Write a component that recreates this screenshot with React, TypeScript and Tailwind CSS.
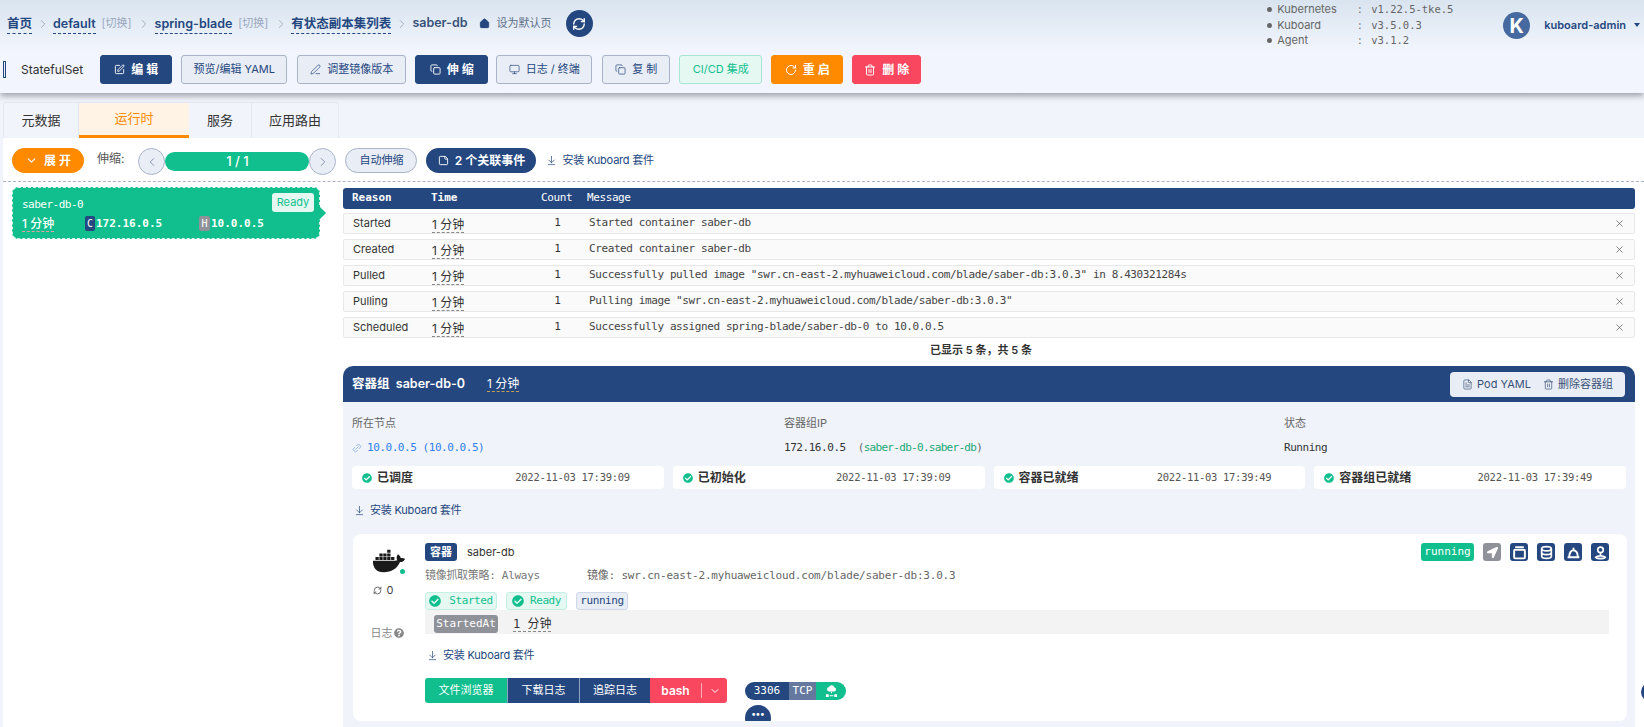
import { ArrowDownToLine, ChevronDown, ChevronLeft, ChevronRight, Copy, FileText, Home, Link2, Monitor, PenLine, RefreshCw, RotateCw, SquarePen, StickyNote, Trash2, X } from 'lucide-react'
import type { ReactNode } from 'react'
import { FaCheckCircle, FaDocker, FaLocationArrow, FaQuestionCircle } from 'react-icons/fa'

const sans = "font-['Inter','Noto_Sans_CJK_SC',sans-serif]"
const mono = "font-['DejaVu_Sans_Mono','Noto_Sans_CJK_SC',monospace]"

const events = [
  { reason: 'Started', message: 'Started container saber-db' },
  { reason: 'Created', message: 'Created container saber-db' },
  { reason: 'Pulled', message: 'Successfully pulled image "swr.cn-east-2.myhuaweicloud.com/blade/saber-db:3.0.3" in 8.430321284s' },
  { reason: 'Pulling', message: 'Pulling image "swr.cn-east-2.myhuaweicloud.com/blade/saber-db:3.0.3"' },
  { reason: 'Scheduled', message: 'Successfully assigned spring-blade/saber-db-0 to 10.0.0.5' },
]

const conditions = [
  { label: '已调度', time: '2022-11-03 17:39:09' },
  { label: '已初始化', time: '2022-11-03 17:39:09' },
  { label: '容器已就绪', time: '2022-11-03 17:39:49' },
  { label: '容器组已就绪', time: '2022-11-03 17:39:49' },
]

const Crumb = ({ children }: { children: ReactNode }) => (
  <span className="border-b border-dashed border-[#24477f] text-[12.5px] leading-[19px] font-semibold text-[#24477f]">{children}</span>
)

const Sep = () => <ChevronRight className="mx-[3.5px] h-[14px] w-[14px] text-[#9aa5b8]" strokeWidth={1.5} />

const Switch = () => <span className="ml-[6px] text-[11px] text-[#9aa7bd]">[切换]</span>

const Btn = ({ className, children }: { className: string; children: ReactNode }) => (
  <button className={`flex h-[29px] items-center justify-center gap-[6px] rounded-[3px] border ${className}`}>{children}</button>
)

const Install = ({ className }: { className: string }) => (
  <span className={`flex items-center gap-[5px] text-[11px] tracking-[-0.2px] text-[#24477f] ${className}`}>
    <ArrowDownToLine className="h-[11px] w-[11px]" strokeWidth={1.5} />
    安装 Kuboard 套件
  </span>
)

const Ago = ({ className }: { className: string }) => (
  <span className={`border-b border-dashed border-[#888] text-xs leading-[14px] ${className}`}>1 分钟</span>
)

const IconBox = ({ children, className = 'bg-[#24477f]' }: { children: ReactNode; className?: string }) => (
  <span className={`flex h-[18px] w-[18px] items-center justify-center rounded-[3px] text-white ${className}`}>{children}</span>
)

const Tag = ({ className, children }: { className: string; children: ReactNode }) => (
  <span className={`flex h-[18px] items-center justify-center rounded-[3px] border text-[11px] tracking-[-0.4px] ${className}`}>{children}</span>
)

export default function App() {
  return (
    <div className={`relative h-[727px] overflow-hidden bg-[#f1f4fb] ${sans}`}>
      <header className="relative z-10 h-[93px] bg-gradient-to-b from-[#d8e4ef] to-[#f2f5fd] to-55% shadow-[0_3px_6px_rgba(60,60,70,0.45)]">
        <div className="flex h-[55px] pl-[7px]">
          <div className="flex h-[47px] items-center">
            <Crumb>首页</Crumb>
            <Sep />
            <Crumb>default</Crumb>
            <Switch />
            <span className="w-[2px]" />
            <Sep />
            <Crumb>spring-blade</Crumb>
            <Switch />
            <span className="w-[2px]" />
            <Sep />
            <Crumb>有状态副本集列表</Crumb>
            <Sep />
            <span className="text-[12.5px] font-semibold text-[#3a5378]">saber-db</span>
            <Home className="ml-[11px] h-[11px] w-[11px] fill-[#24477f] text-[#24477f]" />
            <span className="ml-[7px] text-[11px] text-[#5d6f88]">设为默认页</span>
            <span className="ml-[14px] flex h-[27px] w-[27px] items-center justify-center rounded-full bg-[#24477f]">
              <RefreshCw className="h-[14px] w-[14px] text-white" strokeWidth={2.4} />
            </span>
          </div>
          <div className="ml-auto flex items-start pr-[4px]">
            <div className="w-[236px] pt-[2px] text-[11px] leading-[15.5px] text-[#666]">
              {[
                ['Kubernetes', 'v1.22.5-tke.5'],
                ['Kuboard', 'v3.5.0.3'],
                ['Agent', 'v3.1.2'],
              ].map(([name, version]) => (
                <div key={name} className="flex items-center">
                  <span className="mr-[5px] h-[5px] w-[5px] rounded-full bg-[#666]" />
                  <span className="w-[81px]">{name}</span>
                  <span className="w-[13px]">:</span>
                  <span className={`${mono} text-[10.5px]`}>{version}</span>
                </div>
              ))}
            </div>
            <span className="mt-[12px] flex h-[27px] w-[27px] items-center justify-center rounded-full bg-[#466a9f] text-xl leading-none font-bold text-white">K</span>
            <span className="mt-[17px] ml-[14px] text-[11px] font-semibold text-[#24477f]">kuboard-admin</span>
            <span className="mt-[23px] ml-[8px] h-0 w-0 border-x-[3.5px] border-t-[4px] border-x-transparent border-t-[#24477f]" />
          </div>
        </div>
        <div className="flex items-center pl-[3px]">
          <span className="h-[17px] w-[3px] border border-[#24477f] bg-[#e8edf5]" />
          <span className="mr-[17px] ml-[15px] text-xs text-[#333]">StatefulSet</span>
          <Btn className="w-[72px] border-[#24477f] bg-[#24477f] text-xs font-semibold text-white"><SquarePen className="h-[11px] w-[11px]" />编 辑</Btn>
          <Btn className="ml-[9px] w-[106px] border-[#a9b4c9] bg-[#e9edf5] text-[11px] text-[#24477f]">预览/编辑 YAML</Btn>
          <Btn className="ml-[10px] w-[109px] border-[#a9b4c9] bg-[#e9edf5] text-[11px] text-[#24477f]"><PenLine className="h-[11px] w-[11px]" strokeWidth={1.5} />调整镜像版本</Btn>
          <Btn className="ml-[9px] w-[73px] border-[#24477f] bg-[#24477f] text-xs font-semibold text-white"><Copy className="h-[11px] w-[11px]" />伸 缩</Btn>
          <Btn className="ml-[8px] w-[96px] border-[#a9b4c9] bg-[#e9edf5] text-[11px] text-[#24477f]"><Monitor className="h-[11px] w-[11px]" strokeWidth={1.5} />日志 / 终端</Btn>
          <Btn className="ml-[10px] w-[68px] border-[#a9b4c9] bg-[#e9edf5] text-[11px] text-[#24477f]"><Copy className="h-[11px] w-[11px]" strokeWidth={1.5} />复 制</Btn>
          <Btn className="ml-[9px] w-[83px] border-[#a6e6d2] bg-[#e5f8f2] text-[11px] text-[#10bf8d]">CI/CD 集成</Btn>
          <Btn className="ml-[9px] w-[72px] border-[#ff8a00] bg-[#ff8a00] text-xs font-semibold text-white"><RotateCw className="h-[12px] w-[12px]" />重 启</Btn>
          <Btn className="ml-[9px] w-[69px] border-[#f8475f] bg-[#f8475f] text-xs font-semibold text-white"><Trash2 className="h-[12px] w-[12px]" />删 除</Btn>
        </div>
      </header>

      <main className="ml-[3px] pt-[9px]">
        <div className="flex h-[36px] w-[336px] rounded-t-[3px] border border-b-0 border-[#e3e8f2] text-[13px] text-[#333]">
          <span className="flex w-[75px] items-center justify-center border-r border-[#e3e8f2]">元数据</span>
          <span className="flex w-[110px] items-center justify-center border-b-[3px] border-[#ff8a00] bg-[#fff3e6] text-[#ff8a00]">运行时</span>
          <span className="flex w-[63px] items-center justify-center border-r border-[#e3e8f2]">服务</span>
          <span className="flex flex-1 items-center justify-center">应用路由</span>
        </div>

        <div className="h-[600px] bg-white">
          <div className="flex h-[44px] items-start border-b border-dashed border-[#a9b4c9] pt-[10px] pl-[9px]">
            <button className="flex h-[25px] w-[72px] items-center justify-center gap-[6px] rounded-full bg-[#ff8a00] text-xs font-semibold text-white">
              <ChevronDown className="h-[13px] w-[13px]" />展 开
            </button>
            <span className="mt-[3px] ml-[13px] text-xs text-[#555]">伸缩:</span>
            <div className="ml-[14px] flex items-center">
              <span className="flex h-[27px] w-[27px] items-center justify-center rounded-full border border-[#a9b4c9] bg-[#e9edf5] text-[#7c8aa3]"><ChevronLeft className="h-[14px] w-[14px]" strokeWidth={1.5} /></span>
              <span className="flex h-[19px] w-[144px] items-center justify-center rounded-full bg-[#10bf8d] text-[13px] font-medium text-white">1 / 1</span>
              <span className="flex h-[27px] w-[27px] items-center justify-center rounded-full border border-[#a9b4c9] bg-[#e9edf5] text-[#7c8aa3]"><ChevronRight className="h-[14px] w-[14px]" strokeWidth={1.5} /></span>
            </div>
            <button className="ml-[9px] h-[25px] w-[72px] rounded-full border border-[#a9b4c9] bg-[#e9edf5] text-[11px] text-[#24477f]">自动伸缩</button>
            <button className="ml-[9px] flex h-[25px] w-[110px] items-center justify-center gap-[6px] rounded-full bg-[#24477f] text-xs font-semibold text-white">
              <StickyNote className="h-[11px] w-[11px]" />2 个关联事件
            </button>
            <Install className="mt-[4px] ml-[10px]" />
          </div>

          <div className="flex pt-[5px]">
            <div className="relative ml-[9px] h-[52px] w-[308px] rounded-[6px] border border-dashed border-[#d6f3ea] bg-[#10bf8d] text-white">
              <span className="absolute top-[20px] -right-[5px] h-[10px] w-[10px] rotate-45 bg-[#10bf8d]" />
              <div className="flex items-start justify-between pt-[5px] pr-[5px] pl-[9px]">
                <span className={`${mono} mt-[4px] text-[11px] tracking-[-0.5px]`}>saber-db-0</span>
                <span className="flex h-[19px] w-[42px] items-center justify-center rounded-[3px] bg-[#e5f8f2] text-[11px] text-[#10bf8d]">Ready</span>
              </div>
              <div className={`mt-[2px] flex items-center pl-[9px] text-[11px] ${mono}`}>
                <span className={`w-[63px] ${sans}`}><span className="border-b border-dashed border-[#e7a0a8] text-xs leading-[14px] font-medium">1 分钟</span></span>
                <span className="flex h-[15px] w-[10px] items-center justify-center rounded-[2px] bg-[#24477f] text-[10px]">C</span>
                <span className="w-[104px] pl-[1px] font-semibold">172.16.0.5</span>
                <span className="flex h-[15px] w-[11px] items-center justify-center rounded-[2px] bg-[#8f9299] text-[10px]">H</span>
                <span className="pl-[1px] font-semibold">10.0.0.5</span>
              </div>
            </div>

            <div className="ml-[23px] w-[1292px] pt-[1px]">
              <div className={`flex h-[21px] items-center rounded-[3px] bg-[#24477f] pl-[9px] text-[11px] text-white ${mono}`}>
                <span className="w-[79px] font-bold">Reason</span>
                <span className="w-[110px] font-bold">Time</span>
                <span className="w-[46px] tracking-[-0.4px]">Count</span>
                <span className="tracking-[-0.4px]">Message</span>
              </div>
              <div className="flex flex-col gap-[5px] pt-[4px]">
                {events.map((event) => (
                  <div key={event.reason} className="flex h-[21px] items-center rounded-[2px] border border-[#e8e8e8] bg-[#fafafa] pr-[9px] pl-[9px] text-[#333]">
                    <span className="w-[79px] text-[11px]">{event.reason}</span>
                    <span className="-mt-[2px] w-[98px]"><Ago className="" /></span>
                    <span className={`w-[55px] text-center text-[11px] ${mono}`}>1</span>
                    <span className={`ml-[4px] flex-1 text-[11px] tracking-[-0.4px] text-[#444] ${mono}`}>{event.message}</span>
                    <X className="h-[11px] w-[11px] text-[#555]" strokeWidth={1.5} />
                  </div>
                ))}
              </div>
              <div className="mt-[4px] pr-[16px] text-center text-[11px] leading-[16px] font-semibold text-[#333]">已显示 5 条，共 5 条</div>

              <section className="mt-[8px]">
                <div className="flex h-[36px] items-center rounded-t-[10px] bg-[#24477f] pr-[10px] pl-[9px] text-white">
                  <span className="text-[12.5px] font-semibold">容器组&nbsp; saber-db-0</span>
                  <Ago className="ml-[22px] border-[#c9a050]" />
                  <div className="ml-auto flex h-[25px] w-[175px] items-center justify-center rounded-[4px] bg-[#e9edf5] text-[11px] text-[#3a5378]">
                    <FileText className="mr-[4px] h-[11px] w-[11px]" strokeWidth={1.5} />Pod YAML
                    <Trash2 className="mr-[4px] ml-[12px] h-[11px] w-[11px]" strokeWidth={1.5} />删除容器组
                  </div>
                </div>
                <div className="h-[400px] bg-[#f0f3f9] pt-[13px]">
                  <div className="flex pl-[9px] text-[11px] text-[#666]">
                    <span className="w-[432px]">所在节点</span>
                    <span className="w-[500px]">容器组IP</span>
                    <span>状态</span>
                  </div>
                  <div className={`mt-[8px] flex pl-[9px] text-[11px] leading-[16px] tracking-[-0.45px] ${mono}`}>
                    <span className="flex w-[432px] items-center gap-[5px] text-[#2f80ed]"><Link2 className="h-[10px] w-[10px] -rotate-45 text-[#8fb4ea]" />10.0.0.5 (10.0.0.5)</span>
                    <span className="w-[500px] text-[#333]">172.16.0.5<span className="ml-[12px] tracking-[-0.7px] text-[#666]">(<span className="text-[#19a974]">saber-db-0.saber-db</span>)</span></span>
                    <span className="text-[#333]">Running</span>
                  </div>
                  <div className="mt-[10.5px] grid w-[1283px] grid-cols-4 gap-[9px] pl-[9px]">
                    {conditions.map((condition) => (
                      <div key={condition.label} className="flex h-[23px] items-center justify-between rounded-[4px] bg-white pr-[34px] pl-[10px]">
                        <span className="flex items-center gap-[5px] text-xs font-semibold text-[#333]">
                          <FaCheckCircle className="h-[10px] w-[10px] text-[#10bf8d]" />
                          {condition.label}
                        </span>
                        <span className={`${mono} text-[10.5px] tracking-[-0.3px] text-[#555]`}>{condition.time}</span>
                      </div>
                    ))}
                  </div>
                  <Install className="mt-[13px] ml-[11px]" />

                  <div className="mt-[15.5px] ml-[10px] flex h-[187px] w-[1274px] overflow-hidden rounded-[8px] bg-white">
                    <div className="relative w-[72px] shrink-0 pt-[14px]">
                      <FaDocker className="ml-[20px] h-[26px] w-[32px] text-[#1a1a1a]" />
                      <span className="absolute top-[35px] left-[47px] h-[5px] w-[5px] rounded-full bg-[#10bf8d]" />
                      <div className="mt-[8px] flex items-center justify-center gap-[5px] pr-[12px] text-[11px] text-[#444]"><RefreshCw className="h-[9px] w-[9px]" />0</div>
                      <div className="mt-[26px] flex items-center justify-center gap-px pr-[4px] text-[11px] text-[#888]">日志<FaQuestionCircle className="h-[10px] w-[10px] text-[#888]" /></div>
                    </div>
                    <div className="flex-1 pt-[9px] pr-[18px]">
                      <div className="flex items-center">
                        <span className="flex h-[18px] w-[32px] items-center justify-center rounded-[3px] bg-[#24477f] text-[11px] font-semibold text-white">容器</span>
                        <span className="ml-[10px] text-[11px] text-[#333]">saber-db</span>
                        <span className={`ml-auto flex h-[18px] w-[53px] items-center justify-center rounded-[3px] bg-[#10bf8d] text-[11px] text-white ${mono}`}>running</span>
                        <div className="ml-[9px] flex gap-[9px]">
                          <IconBox className="bg-[#8f9299]"><FaLocationArrow className="h-[11px] w-[11px]" /></IconBox>
                          <IconBox>
                            <svg viewBox="0 0 14 14" className="h-[15px] w-[15px]" fill="none" stroke="currentColor" strokeWidth="1.8"><rect x="2" y="4.5" width="10" height="8" rx="1" /><path d="M3 2h8" /></svg>
                          </IconBox>
                          <IconBox>
                            <svg viewBox="0 0 14 14" className="h-[15px] w-[15px]" fill="none" stroke="currentColor" strokeWidth="1.6"><ellipse cx="7" cy="3.5" rx="4.5" ry="2" /><path d="M2.500 3.500v7c0 1.100 2 2 4.500 2s4.500-.9 4.500-2v-7M2.500 7c0 1.100 2 2 4.500 2s4.500-.9 4.500-2" /></svg>
                          </IconBox>
                          <IconBox>
                            <svg viewBox="0 0 14 14" className="h-[15px] w-[15px]" fill="none" stroke="currentColor" strokeWidth="1.8"><path d="M1.500 11.500h11M3 11.500c0-4 1.500-6.500 4-6.500s4 2.500 4 6.500M7 2.500v2.500" /></svg>
                          </IconBox>
                          <IconBox>
                            <svg viewBox="0 0 14 14" className="h-[15px] w-[15px]" fill="none" stroke="currentColor" strokeWidth="1.6"><circle cx="7" cy="4.500" r="2.600" /><path d="M7 7.100v3M2.500 11.500c1-1.200 2.500-1.400 4.500-1.400s3.500.2 4.500 1.400c-1 1-2.500 1.200-4.500 1.200s-3.500-.2-4.500-1.200z" /></svg>
                          </IconBox>
                        </div>
                      </div>
                      <div className={`mt-[7px] flex text-[11px] leading-[16px] text-[#777] ${mono}`}>
                        <span className="w-[162px] tracking-[-0.3px]">镜像抓取策略: Always</span>
                        <span className="tracking-[-0.2px] text-[#666]">镜像: swr.cn-east-2.myhuaweicloud.com/blade/saber-db:3.0.3</span>
                      </div>
                      <div className={`mt-[8px] flex gap-[9px] ${mono}`}>
                        <Tag className="w-[72px] gap-[8px] border-[#c3f0e2] bg-[#e5f8f2] text-[#10bf8d]"><FaCheckCircle className="h-[12px] w-[12px]" />Started</Tag>
                        <Tag className="w-[61px] gap-[6px] border-[#c3f0e2] bg-[#e5f8f2] text-[#10bf8d]"><FaCheckCircle className="h-[12px] w-[12px]" />Ready</Tag>
                        <Tag className="w-[52px] border-[#cfd7e6] bg-[#e9edf5] text-[#24477f]">running</Tag>
                      </div>
                      <div className={`flex h-[24px] items-end bg-[#f3f3f3] pb-[1px] pl-[9px] ${mono}`}>
                        <span className="flex h-[18px] w-[64px] items-center justify-center rounded-[3px] bg-[#8f9299] text-[11px] text-white">StartedAt</span>
                        <Ago className="mb-[1px] ml-[15px] text-[#333]" />
                      </div>
                      <Install className="mt-[13px] ml-[2px]" />
                      <div className="mt-[14.5px] flex items-start">
                        <div className="flex h-[25px] overflow-hidden rounded-[3px] text-[11px] text-white">
                          <span className="flex w-[82px] items-center justify-center bg-[#10bf8d]">文件浏览器</span>
                          <span className="flex w-[72px] items-center justify-center border-l border-[#8ea3c4] bg-[#24477f]">下载日志</span>
                          <span className="flex w-[71px] items-center justify-center border-l border-[#8ea3c4] bg-[#24477f]">追踪日志</span>
                          <span className="flex w-[77px] items-center bg-[#f8475f] text-xs font-semibold">
                            <span className="w-[51px] text-center">bash</span>
                            <span className="flex h-[15px] flex-1 items-center justify-center border-l border-[#fbb0ba]"><ChevronDown className="h-[12px] w-[12px]" /></span>
                          </span>
                        </div>
                        <div className="ml-[18px] flex flex-col">
                          <div className={`mt-[4px] flex h-[18px] overflow-hidden rounded-full text-[11px] text-white ${mono}`}>
                            <span className="flex w-[44px] items-center justify-center bg-[#24477f]">3306</span>
                            <span className="flex w-[27px] items-center justify-center bg-[#65799f]">TCP</span>
                            <span className="flex w-[30px] items-center justify-center bg-[#10bf8d]">
                              <svg viewBox="0 0 14 14" className="h-[13px] w-[13px]" fill="white"><path d="M4 7a2.500 2.500 0 0 1 .3-4.900A3 3 0 0 1 10 2.500 2.300 2.300 0 0 1 10 7z" /><path d="M6.500 7h1v2h-1zM1 10h3v3H1zM10 10h3v3h-3zM5 11h4v1H5z" /></svg>
                            </span>
                          </div>
                          <span className="mt-[5px] flex h-[26px] w-[26px] items-center justify-center rounded-full bg-[#24477f] pb-[9px] text-[9px] leading-none font-bold text-white">•••</span>
                        </div>
                      </div>
                    </div>
                  </div>
                </div>
              </section>
            </div>
          </div>
        </div>
      </main>
      <span className="absolute top-[682px] -right-[11px] h-[20px] w-[14px] rounded-l-full bg-[#24477f]" />
    </div>
  )
}
